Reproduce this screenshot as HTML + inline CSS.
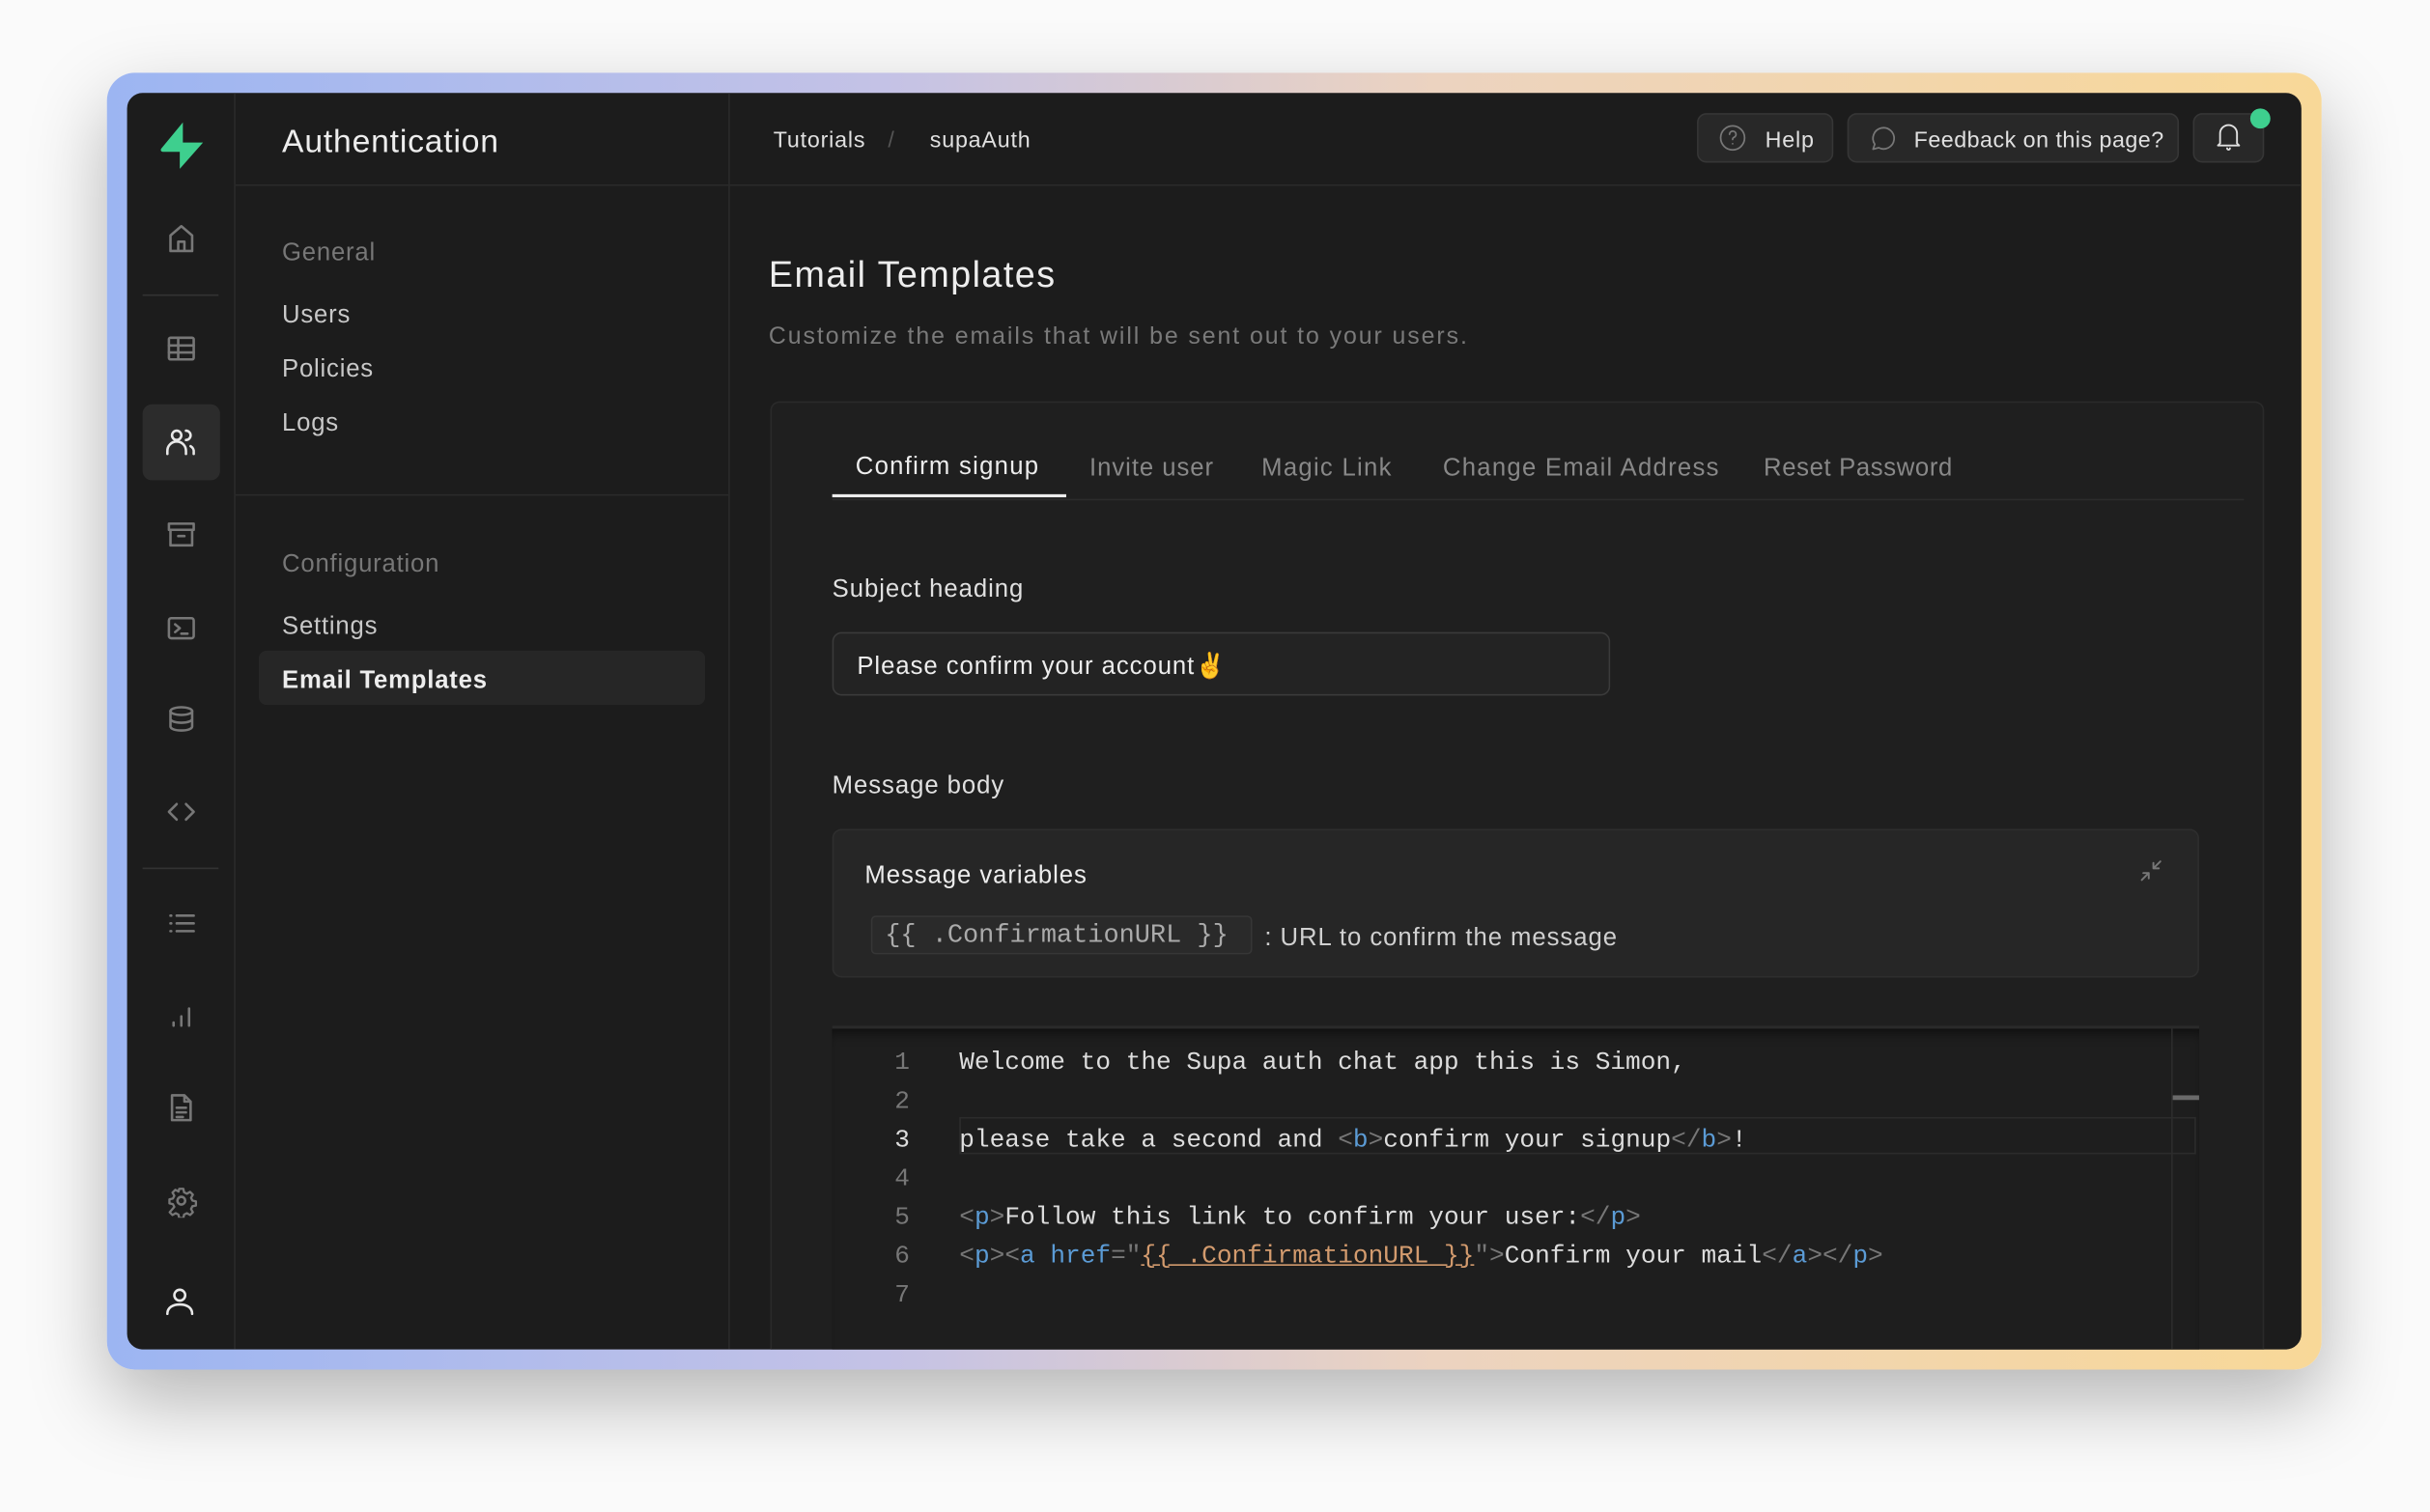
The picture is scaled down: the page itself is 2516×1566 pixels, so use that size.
<!DOCTYPE html>
<html><head><meta charset="utf-8"><style>
*{margin:0;padding:0;box-sizing:border-box}
html,body{width:2516px;height:1566px;overflow:hidden;background:#fafafa}
#w{position:absolute;left:0;top:0;width:1568px;height:976px;transform:scale(1.6046);transform-origin:0 0;font-family:"Liberation Sans",sans-serif;letter-spacing:0.5px}
.abs{position:absolute}
.frame{left:69px;top:47px;width:1429px;height:837px;border-radius:18px;background:linear-gradient(90deg,#9cb5f2 0%,#c4c2e6 35%,#ecd3c0 60%,#f8d898 100%);box-shadow:0 20px 50px rgba(0,0,0,.28)}
.inner{left:82px;top:60px;width:1403px;height:811px;border-radius:10px;background:#1c1c1c;overflow:hidden}
.t{position:absolute;white-space:nowrap;line-height:1;margin-top:1.5px}
svg.i{position:absolute;width:22px;height:22px;fill:none;stroke:#777;stroke-width:1.6;stroke-linecap:round;stroke-linejoin:round}
.mono{font-family:"Liberation Mono",monospace;font-size:16.3px;letter-spacing:0}
.bl{color:#5b9bd5}.gr{color:#777}.or{color:#d39b6e}
</style></head><body><div id="w">
<div class="abs frame"></div>
<div class="abs inner">
 <div class="abs" style="left:69px;top:0;width:1px;height:811px;background:#2a2a2a"></div>
 <svg class="abs" style="left:19px;top:18px" width="32" height="32" viewBox="0 0 32 32"><path d="M17 1 L3 18 Q2 20 5 20 L15 20 L15 31 L30 14 L17 14 Z" fill="#3ecf8e"/></svg>
 <svg class="i" style="left:24px;top:83px" viewBox="0 0 22 22"><path d="M4 19V9l7-6 7 6v10zM9 19v-6h4v6"/></svg>
 <div class="abs" style="left:10px;top:130px;width:49px;height:1px;background:#333"></div>
 <svg class="i" style="left:24px;top:154px" viewBox="0 0 22 22"><rect x="3" y="4" width="16" height="14" rx="1"/><path d="M3 9h16M3 13.5h16M9 4v14"/></svg>
 <div class="abs" style="left:10px;top:201px;width:50px;height:49px;border-radius:6px;background:#2c2c2c"></div>
 <svg class="i" style="left:24px;top:214px;stroke:#e8e8e8" viewBox="0 0 22 22"><circle cx="8" cy="7" r="3"/><path d="M2 19v-2a5 5 0 0 1 12 0v2M14 4a3 3 0 0 1 0 6M17 14a4 4 0 0 1 2 4v1"/></svg>
 <svg class="i" style="left:24px;top:274px" viewBox="0 0 22 22"><rect x="3" y="4" width="16" height="4"/><path d="M4 8v10h14V8M9 12h4"/></svg>
 <svg class="i" style="left:24px;top:334px" viewBox="0 0 22 22"><rect x="3" y="5" width="16" height="13" rx="1.5"/><path d="M7 9l3 2.5-3 2.5M11 15h4"/></svg>
 <svg class="i" style="left:24px;top:393px" viewBox="0 0 22 22"><ellipse cx="11" cy="6" rx="7" ry="2.5"/><path d="M4 6v10c0 1.4 3 2.5 7 2.5s7-1.1 7-2.5V6M4 11c0 1.4 3 2.5 7 2.5s7-1.1 7-2.5"/></svg>
 <svg class="i" style="left:24px;top:453px" viewBox="0 0 22 22"><path d="M8 6l-5 5 5 5M14 6l5 5-5 5"/></svg>
 <div class="abs" style="left:10px;top:500px;width:49px;height:1px;background:#333"></div>
 <svg class="i" style="left:24px;top:525px" viewBox="0 0 22 22"><path d="M4 6h.5M4 11h.5M4 16h.5M8 6h11M8 11h11M8 16h11"/></svg>
 <svg class="i" style="left:24px;top:585px" viewBox="0 0 22 22"><path d="M6 17v-2M11 17v-6M16 17V6"/></svg>
 <svg class="i" style="left:24px;top:644px" viewBox="0 0 22 22"><path d="M5 3h8l4 4v12H5zM13 3v4h4M8 11h6M8 14h6M8 17h4"/></svg>
 <svg class="i" style="left:24px;top:704px" viewBox="0 0 22 22"><circle cx="11" cy="11" r="2.5"/><path d="M9.5 2.5h3l.5 2.5 2 1 2.3-1.3 2 2-1.3 2.3 1 2 2.5.5v3l-2.5.5-1 2 1.3 2.3-2 2-2.3-1.3-2 1-.5 2.5h-3l-.5-2.5-2-1-2.3 1.3-2-2L6 15.5l-1-2-2.5-.5v-3L5 9.5l1-2L4.7 5.2l2-2L9 4.5z" transform="scale(0.9) translate(1.2 1.2)"/></svg>
 <svg class="i" style="left:23px;top:769px;stroke:#e8e8e8" viewBox="0 0 22 22"><circle cx="11" cy="7" r="3.5"/><path d="M3 19c0-4 3.5-6 8-6s8 2 8 6"/></svg>

 <div class="abs" style="left:388px;top:0;width:1px;height:811px;background:#2a2a2a"></div>
 <div class="abs" style="left:70px;top:59px;width:1333px;height:1px;background:#2a2a2a"></div>
 <div class="t" style="left:100px;top:19px;font-size:21px;color:#ededed">Authentication</div>
 <div class="t" style="left:100px;top:94px;font-size:16px;color:#777">General</div>
 <div class="t" style="left:100px;top:134px;font-size:16px;color:#c8c8c8">Users</div>
 <div class="t" style="left:100px;top:169px;font-size:16px;color:#c8c8c8">Policies</div>
 <div class="t" style="left:100px;top:204px;font-size:16px;color:#c8c8c8">Logs</div>
 <div class="abs" style="left:70px;top:259px;width:318px;height:1px;background:#2a2a2a"></div>
 <div class="t" style="left:100px;top:295px;font-size:16px;color:#777">Configuration</div>
 <div class="t" style="left:100px;top:335px;font-size:16px;color:#c8c8c8">Settings</div>
 <div class="abs" style="left:85px;top:360px;width:288px;height:35px;border-radius:5px;background:#262626"></div>
 <div class="t" style="left:100px;top:370px;font-size:16px;color:#ededed;font-weight:bold">Email Templates</div>

 <div class="t" style="left:417px;top:22px;font-size:14.5px;color:#e0e0e0">Tutorials</div>
 <div class="t" style="left:491px;top:22px;font-size:14.5px;color:#555">/</div>
 <div class="t" style="left:518px;top:22px;font-size:14.5px;color:#e0e0e0">supaAuth</div>
 <div class="abs" style="left:1013px;top:13px;width:88px;height:32px;border:1px solid #363636;border-radius:6px;background:#282828"></div>
 <svg class="i" style="left:1026px;top:19px;width:20px;height:20px;stroke-width:1.2" viewBox="0 0 22 22"><circle cx="11" cy="11" r="8.5"/><path d="M8.8 8.5a2.3 2.3 0 1 1 3 2.2c-.6.3-.8.8-.8 1.5M11 15.2h.01"/></svg>
 <div class="t" style="left:1057px;top:22px;font-size:14.5px;color:#e0e0e0">Help</div>
 <div class="abs" style="left:1110px;top:13px;width:214px;height:32px;border:1px solid #363636;border-radius:6px;background:#282828"></div>
 <svg class="i" style="left:1123px;top:19px;width:20px;height:20px;stroke-width:1.2" viewBox="0 0 22 22"><path d="M4 19l1.2-3.5A7.5 7.5 0 1 1 8 18z"/></svg>
 <div class="t" style="left:1153px;top:22px;font-size:14.5px;color:#e0e0e0;letter-spacing:0.3px">Feedback on this page?</div>
 <div class="abs" style="left:1333px;top:13px;width:46px;height:32px;border:1px solid #363636;border-radius:6px;background:#282828"></div>
 <svg class="i" style="left:1346px;top:18px;width:20px;height:20px;stroke:#e0e0e0;stroke-width:1.3" viewBox="0 0 22 22"><path d="M5 16V9a6 6 0 0 1 12 0v7l1.5 1.5h-15zM10 19.5a1 1 0 0 0 2 0"/></svg>
 <div class="abs" style="left:1370px;top:10px;width:13px;height:13px;border-radius:50%;background:#3ecf8e"></div>

 <div class="t" style="left:414px;top:104px;font-size:23.5px;color:#ededed;letter-spacing:0.9px">Email Templates</div>
 <div class="t" style="left:414px;top:148px;font-size:15.5px;color:#7a7a7a;letter-spacing:1.2px">Customize the emails that will be sent out to your users.</div>
 <div class="abs" style="left:415px;top:199px;width:964px;height:640px;border:1px solid #2a2a2a;border-radius:6px;background:#1f1f1f"></div>
 <div class="abs" style="left:455px;top:262px;width:911px;height:1px;background:#2c2c2c"></div>
 <div class="abs" style="left:455px;top:259px;width:151px;height:2px;background:#ededed"></div>
 <div class="t" style="left:470px;top:232px;font-size:16px;color:#ededed;letter-spacing:0.8px">Confirm signup</div>
 <div class="t" style="left:621px;top:233px;font-size:16px;color:#888;letter-spacing:0.6px">Invite user</div>
 <div class="t" style="left:732px;top:233px;font-size:16px;color:#888;letter-spacing:0.8px">Magic Link</div>
 <div class="t" style="left:849px;top:233px;font-size:16px;color:#888;letter-spacing:0.8px">Change Email Address</div>
 <div class="t" style="left:1056px;top:233px;font-size:16px;color:#888;letter-spacing:0.4px">Reset Password</div>
 <div class="t" style="left:455px;top:311px;font-size:16px;color:#e0e0e0;letter-spacing:0.6px">Subject heading</div>
 <div class="abs" style="left:455px;top:348px;width:502px;height:41px;border:1px solid #3a3a3a;border-radius:6px;background:#232323"></div>
 <div class="t" style="left:471px;top:361px;font-size:16px;color:#ededed;letter-spacing:0.6px">Please confirm your account✌</div>
 <div class="t" style="left:455px;top:438px;font-size:16px;color:#e0e0e0;letter-spacing:0.6px">Message body</div>
 <div class="abs" style="left:455px;top:475px;width:882px;height:96px;border:1px solid #2e2e2e;border-radius:6px;background:#262626"></div>
 <div class="t" style="left:476px;top:496px;font-size:16px;color:#ededed;letter-spacing:0.6px">Message variables</div>
 <svg class="i" style="left:1298px;top:494px;width:16px;height:16px;stroke-width:1.2" viewBox="0 0 16 16"><path d="M2 14l4.5-4.5M6.5 9.5H3M6.5 9.5v3.5M14 2L9.5 6.5M9.5 6.5H13M9.5 6.5V3"/></svg>
 <div class="abs" style="left:480px;top:531px;width:246px;height:25px;border:1px solid #363636;border-radius:3px;background:#2a2a2a"></div>
 <div class="t mono" style="left:489px;top:535px;color:#aaa;font-size:16.8px">{{ .ConfirmationURL }}</div>
 <div class="t" style="left:734px;top:536px;font-size:16px;color:#d0d0d0;letter-spacing:0.6px">: URL to confirm the message</div>

 <div class="abs" style="left:455px;top:602px;width:882px;height:220px;background:#1e1e1e;border-top:2px solid #2a2a2a;box-shadow:inset 0 6px 8px -4px rgba(0,0,0,.6)"></div>
 <div class="abs" style="left:1319px;top:604px;width:1px;height:210px;background:#2c2c2c"></div>
 <div class="abs" style="left:1320px;top:647px;width:17px;height:3px;background:#6a6a6a"></div>
 <div class="abs" style="left:537px;top:661px;width:798px;height:24px;border:1px solid #2c2c2c"></div>
 <div class="mono" style="position:absolute;left:490px;top:613px;line-height:25px;color:#777;text-align:right;width:15px">1<br>2<br><span style="color:#ddd">3</span><br>4<br>5<br>6<br>7</div>
 <div class="mono" style="position:absolute;left:537px;top:613px;line-height:25px;color:#ddd;white-space:pre">Welcome to the Supa auth chat app this is Simon,

please take a second and <span class="gr">&lt;</span><span class="bl">b</span><span class="gr">&gt;</span>confirm your signup<span class="gr">&lt;/</span><span class="bl">b</span><span class="gr">&gt;</span>!

<span class="gr">&lt;</span><span class="bl">p</span><span class="gr">&gt;</span>Follow this link to confirm your user:<span class="gr">&lt;/</span><span class="bl">p</span><span class="gr">&gt;</span>
<span class="gr">&lt;</span><span class="bl">p</span><span class="gr">&gt;&lt;</span><span class="bl">a href</span><span class="gr">="</span><span class="or" style="text-decoration:underline">{{ .ConfirmationURL }}</span><span class="gr">"&gt;</span>Confirm your mail<span class="gr">&lt;/</span><span class="bl">a</span><span class="gr">&gt;&lt;/</span><span class="bl">p</span><span class="gr">&gt;</span>
</div>
</div>
</div></body></html>
